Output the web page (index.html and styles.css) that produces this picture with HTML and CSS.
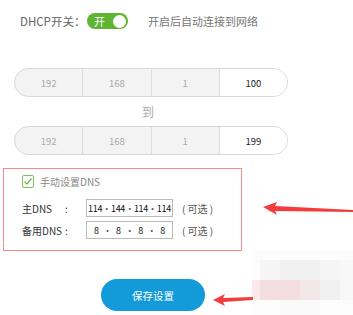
FILE: index.html
```html
<!DOCTYPE html>
<html lang="zh-CN">
<head>
    <meta charset="UTF-8">
    <meta name="viewport" content="width=device-width, initial-scale=1.0">
    <title>DHCP 设置</title>
    <link rel="stylesheet" href="styles.css">
</head>
<body>
    <div class="page">
        <div class="dhcp-row">
            <span class="dhcp-label">DHCP开关：</span>
            <span class="toggle"><span class="toggle-text">开</span><span class="knob"></span></span>
            <span class="dhcp-hint">开启后自动连接到网络</span>
        </div>

        <div class="ip-row">
            <span class="seg seg-first">192</span>
            <span class="seg">168</span>
            <span class="seg">1</span>
            <span class="seg seg-last">100</span>
        </div>
        <div class="to">到</div>
        <div class="ip-row">
            <span class="seg seg-first">192</span>
            <span class="seg">168</span>
            <span class="seg">1</span>
            <span class="seg seg-last">199</span>
        </div>

        <div class="dns-box">
            <div class="check-row">
                <span class="checkbox">
                    <svg width="10" height="9" viewBox="0 0 10 9"><path d="M1.5 4.5 L4 7 L8.5 1.5" fill="none" stroke="#6dbb45" stroke-width="1.3"/></svg>
                </span>
                <span class="check-label">手动设置DNS</span>
            </div>
            <div class="dns-row">
                <span class="dns-label">主DNS</span>
                <span class="colon">:</span>
                <span class="dns-input"><span>114</span><i>·</i><span>144</span><i>·</i><span>114</span><i>·</i><span>114</span></span>
                <span class="optional">( 可选 )</span>
            </div>
            <div class="dns-row">
                <span class="dns-label">备用DNS</span>
                <span class="colon">:</span>
                <span class="dns-input wide"><span>8</span><i>·</i><span>8</span><i>·</i><span>8</span><i>·</i><span>8</span></span>
                <span class="optional">( 可选 )</span>
            </div>
        </div>

        <div class="actions">
            <button class="save-btn">保存设置</button>
        </div>
    </div>

    <!-- mosaic watermark -->
    <div class="mosaic">
        <span></span><span></span><span></span><span></span><span></span><span></span>
        <span></span><span class="c1"></span><span class="c2"></span><span class="c2"></span><span class="c1"></span><span class="c3"></span>
        <span class="c4"></span><span class="c5"></span><span class="c5"></span><span class="c6"></span><span class="c7"></span><span class="c3"></span>
        <span></span><span></span><span class="c8"></span><span class="c8"></span><span></span><span></span>
    </div>

    <svg class="arrow arrow-dns" width="92" height="14" viewBox="0 0 92 14">
        <path d="M0 5 L14 0 L12 4 L90 8 L90 10 L12 9 L14 13 Z" fill="#f33d3d"/>
    </svg>
    <svg class="arrow arrow-save" width="42" height="14" viewBox="0 0 42 14">
        <path d="M0 7 L12 1 L10 5 L40 4 L40 7 L10 9 L12 13 Z" fill="#f33d3d"/>
    </svg>
</body>
</html>
```

FILE: styles.css
```css
body {
    margin: 0;
    background-color: #fff;
    font-family: "Noto Sans CJK SC", "Noto Sans", sans-serif;
    color: #555;
    width: 353px;
    height: 315px;
    overflow: hidden;
    position: relative;
}

.page {
    padding-top: 13px;
}

.dhcp-row {
    display: flex;
    align-items: center;
    height: 16px;
    padding-left: 20px;
    font-size: 11.5px;
    white-space: nowrap;
}

.dhcp-label {
    color: #666;
    width: 67px;
    flex-shrink: 0;
}

.toggle {
    display: flex;
    align-items: center;
    justify-content: space-between;
    flex-shrink: 0;
    width: 41px;
    height: 16px;
    box-sizing: border-box;
    padding: 0 2px 0 7px;
    border-radius: 8px;
    background-color: #5db533;
}

.toggle-text {
    color: #fff;
    font-size: 11px;
}

.knob {
    width: 13px;
    height: 13px;
    border-radius: 50%;
    background-color: #fff;
}

.dhcp-hint {
    margin-left: 20px;
    color: #777;
    font-size: 11px;
}

.ip-row {
    display: flex;
    margin: 0 0 0 14px;
    width: 274px;
    height: 29px;
    box-sizing: border-box;
    border: 1px solid #d8d8d8;
    border-radius: 15px;
    overflow: hidden;
    background-color: #f3f3f3;
}

.dhcp-row + .ip-row {
    margin-top: 39px;
}

.seg {
    flex: 1;
    display: flex;
    align-items: center;
    justify-content: center;
    font-size: 9.5px;
    color: #aaa;
    border-left: 1px solid #dcdcdc;
}

.seg-first {
    border-left: none;
}

.seg-last {
    background-color: #fff;
    color: #222;
}

.to {
    height: 29px;
    line-height: 29px;
    text-align: center;
    width: 296px;
    font-size: 12px;
    color: #aaa;
}

.dns-box {
    margin: 13px 0 0 3px;
    width: 239px;
    height: 83px;
    box-sizing: border-box;
    border: 1px solid #f58a8a;
    padding: 6px 0 0 18px;
}

.check-row {
    display: flex;
    align-items: center;
    height: 13px;
}

.checkbox {
    display: flex;
    align-items: center;
    justify-content: center;
    width: 12px;
    height: 13px;
    box-sizing: border-box;
    border: 1px solid #7cc35a;
    border-radius: 2px;
}

.check-label {
    margin-left: 6px;
    font-size: 10px;
    color: #888;
    white-space: nowrap;
}

.dns-row {
    display: flex;
    align-items: center;
    height: 18px;
    font-size: 10px;
    color: #333;
    white-space: nowrap;
}

.check-row + .dns-row {
    margin-top: 11px;
}

.dns-row + .dns-row {
    margin-top: 4px;
}

.dns-label {
    width: 43px;
    flex-shrink: 0;
}

.colon {
    width: 21px;
    flex-shrink: 0;
    box-sizing: border-box;
}

.dns-input {
    display: flex;
    align-items: center;
    justify-content: space-between;
    flex-shrink: 0;
    width: 87px;
    height: 18px;
    box-sizing: border-box;
    border: 1px solid #bbb;
    padding: 0 1px;
    font-size: 9px;
    color: #111;
    letter-spacing: -0.3px;
    overflow: hidden;
}

.dns-input.wide {
    padding: 0 7px;
}

.dns-input i {
    font-style: normal;
    color: #555;
}

.optional {
    margin-left: 9px;
    font-size: 10px;
    color: #555;
}

.actions {
    padding: 28px 0 0 101px;
}

.save-btn {
    width: 104px;
    height: 32px;
    border: none;
    border-radius: 16px;
    background-color: #139ad8;
    color: #fff;
    font-family: "Noto Sans CJK SC", sans-serif;
    font-size: 10.5px;
    cursor: pointer;
}

.mosaic {
    position: absolute;
    left: 252px;
    top: 250px;
    width: 101px;
    display: grid;
    grid-template-columns: 8px 20px 20px 20px 20px 13px;
    grid-template-rows: 10px 20px 20px 15px;
    opacity: 0.85;
}

.mosaic span { background-color: #fcfcfc; }
.mosaic .c1 { background-color: #f4f4f4; }
.mosaic .c2 { background-color: #efefef; }
.mosaic .c3 { background-color: #f7f7f7; }
.mosaic .c4 { background-color: #f8e6e7; }
.mosaic .c5 { background-color: #f2d8da; }
.mosaic .c6 { background-color: #efe3e3; }
.mosaic .c7 { background-color: #eeeeee; }
.mosaic .c8 { background-color: #f8f8f8; }

.arrow {
    position: absolute;
}

.arrow-dns {
    left: 263px;
    top: 202px;
}

.arrow-save {
    left: 213px;
    top: 293px;
}
```
